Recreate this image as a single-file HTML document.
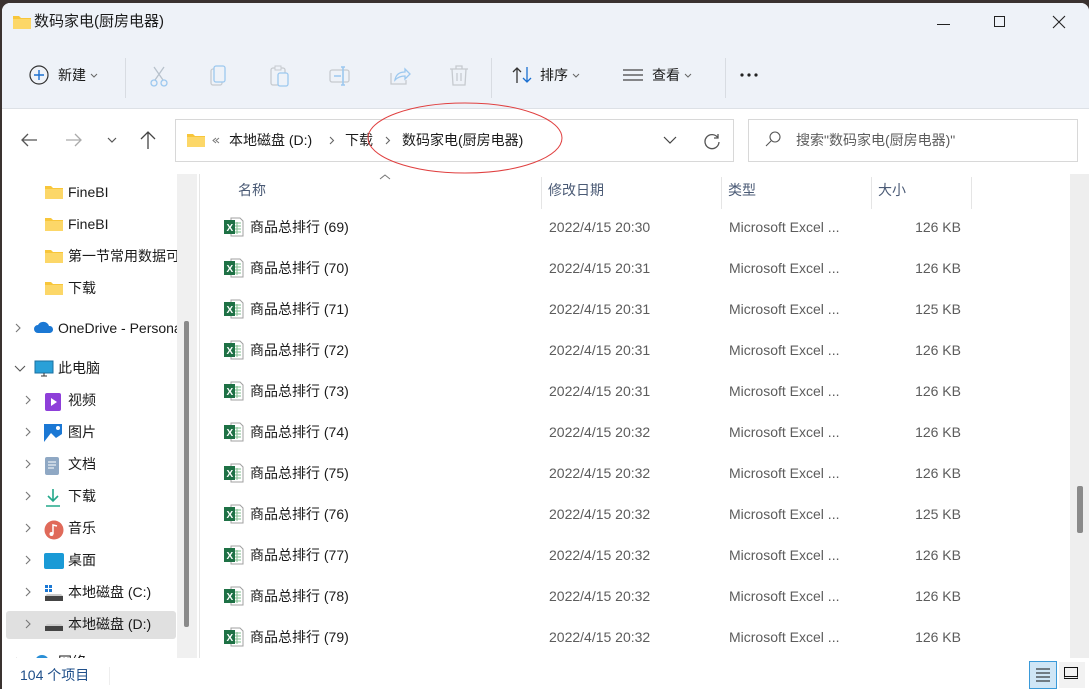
<!DOCTYPE html>
<html><head><meta charset="utf-8"><style>
*{margin:0;padding:0;box-sizing:border-box}
body{width:1089px;height:689px;overflow:hidden;background:#3a3230;font-family:"Liberation Sans","Noto Sans CJK SC",sans-serif;font-size:14px;line-height:20px;color:#1a1a1a;position:relative}
.win{position:absolute;left:2px;top:3px;right:0;bottom:0;background:#fff;border-top-left-radius:8px;border-top-right-radius:8px;overflow:hidden}
.top{position:absolute;left:0;top:0;right:0;height:106px;background:#eef2f8;border-bottom:1px solid #dde1e6}
.a{position:absolute;white-space:nowrap}
.sep{position:absolute;width:1px;background:#d8dce2}
.gray{color:#5c5c5c}
.hdr{color:#4a5a75;font-size:14px}
.row{position:absolute;left:0;width:1000px;height:20px}
.dd{display:inline-block;vertical-align:middle;margin-left:4px}
</style></head><body>
<div class="win">
<div class="top">
 <svg class="a" style="left:10px;top:11px" width="20" height="16"><path d="M1 2h6l2 2h10v11H1z" fill="#f8c63a"/><path d="M1 5h18v10H1z" fill="#fcd768"/></svg>
 <div class="a" style="left:32px;top:9px;font-size:15px">数码家电(厨房电器)</div>
 <div class="a" style="left:935px;top:21px;width:13px;height:1px;background:#222"></div>
 <div class="a" style="left:992px;top:13px;width:11px;height:11px;border:1px solid #222"></div>
 <svg class="a" style="left:1050px;top:12px" width="14" height="14"><path d="M1 1l12 12M13 1L1 13" stroke="#222" stroke-width="1.1"/></svg>
 <svg class="a" style="left:27px;top:62px" width="20" height="20"><circle cx="10" cy="10" r="9" fill="none" stroke="#333" stroke-width="1.2"/><path d="M10 5v10M5 10h10" stroke="#1a6fd0" stroke-width="1.4"/></svg>
 <div class="a" style="left:56px;top:62px">新建<svg class="dd" width="8" height="6"><path d="M1 1l3 3 3-3" fill="none" stroke="#666"/></svg></div>
 <div class="sep" style="left:123px;top:55px;height:40px"></div>
 <svg class="a" style="left:146px;top:62px" width="22" height="22"><path d="M6 2l9 13M16 2L7 15" stroke="#b8c2cc" stroke-width="1.3"/><circle cx="6" cy="18" r="3" fill="none" stroke="#9cc8ef" stroke-width="1.3"/><circle cx="16" cy="18" r="3" fill="none" stroke="#9cc8ef" stroke-width="1.3"/></svg>
 <svg class="a" style="left:207px;top:62px" width="20" height="22"><rect x="2" y="4" width="11" height="16" rx="2" fill="none" stroke="#c6cacf" stroke-width="1.3"/><rect x="5" y="1" width="11" height="16" rx="2" fill="#eef2f8" stroke="#9cc8ef" stroke-width="1.3"/></svg>
 <svg class="a" style="left:267px;top:62px" width="22" height="22"><rect x="2" y="3" width="14" height="17" rx="2" fill="none" stroke="#c6cacf" stroke-width="1.3"/><rect x="6" y="1" width="6" height="4" fill="#eef2f8" stroke="#c6cacf"/><rect x="9" y="8" width="10" height="13" rx="2" fill="#eef2f8" stroke="#9cc8ef" stroke-width="1.3"/></svg>
 <svg class="a" style="left:327px;top:62px" width="22" height="22"><rect x="1" y="5" width="19" height="12" rx="2" fill="none" stroke="#c6cacf" stroke-width="1.3"/><path d="M5 11h7M14 2v18M12 2h4M12 20h4" stroke="#9cc8ef" stroke-width="1.6"/></svg>
 <svg class="a" style="left:387px;top:62px" width="22" height="22"><path d="M2 8v11h15v-4" fill="none" stroke="#c6cacf" stroke-width="1.3"/><path d="M6 15c1-6 5-8 10-8V4l5 5-5 5v-3c-4 0-7 1-10 4z" fill="none" stroke="#9cc8ef" stroke-width="1.3"/></svg>
 <svg class="a" style="left:447px;top:62px" width="20" height="22"><path d="M1 4h18M7 4V1h6v3M3 4l1 16h12l1-16M8 8v8M12 8v8" fill="none" stroke="#c6cacf" stroke-width="1.3"/></svg>
 <div class="sep" style="left:489px;top:55px;height:40px"></div>
 <svg class="a" style="left:510px;top:63px" width="22" height="18"><path d="M5 17V2M1 6l4-4 4 4" fill="none" stroke="#333" stroke-width="1.3"/><path d="M15 1v15M11 12l4 4 4-4" fill="none" stroke="#1a6fd0" stroke-width="1.3"/></svg>
 <div class="a" style="left:538px;top:62px">排序<svg class="dd" width="8" height="6"><path d="M1 1l3 3 3-3" fill="none" stroke="#666"/></svg></div>
 <svg class="a" style="left:621px;top:66px" width="20" height="12"><path d="M0 1h20M0 6h20M0 11h20" stroke="#444" stroke-width="1.2"/></svg>
 <div class="a" style="left:650px;top:62px">查看<svg class="dd" width="8" height="6"><path d="M1 1l3 3 3-3" fill="none" stroke="#666"/></svg></div>
 <div class="sep" style="left:723px;top:55px;height:40px"></div>
 <svg class="a" style="left:738px;top:70px" width="20" height="4"><circle cx="2" cy="2" r="1.6" fill="#222"/><circle cx="9" cy="2" r="1.6" fill="#222"/><circle cx="16" cy="2" r="1.6" fill="#222"/></svg>
</div>
<!-- nav -->
<svg class="a" style="left:18px;top:129px" width="18" height="16"><path d="M17 8H2M8 2L2 8l6 6" fill="none" stroke="#555" stroke-width="1.3"/></svg>
<svg class="a" style="left:63px;top:129px" width="18" height="16"><path d="M1 8h15M10 2l6 6-6 6" fill="none" stroke="#aaa" stroke-width="1.3"/></svg>
<svg class="a" style="left:105px;top:133px" width="10" height="8"><path d="M1 2l4 4 4-4" fill="none" stroke="#555" stroke-width="1.2"/></svg>
<svg class="a" style="left:137px;top:127px" width="18" height="20"><path d="M9 19V2M2 9l7-7 7 7" fill="none" stroke="#444" stroke-width="1.3"/></svg>
<div class="a" style="left:173px;top:116px;width:559px;height:43px;border:1px solid #d8d8d8;background:#fff"></div>
<svg class="a" style="left:184px;top:129px" width="20" height="16"><path d="M1 2h6l2 2h10v11H1z" fill="#f8c63a"/><path d="M1 5h18v10H1z" fill="#fcd768"/></svg>
<svg class="a" style="left:210px;top:134px" width="8" height="7"><path d="M4 1L1 3.5 4 6M7 1L4 3.5 7 6" fill="none" stroke="#777"/></svg>
<div class="a" style="left:227px;top:127px">本地磁盘 (D:)</div>
<svg class="a" style="left:327px;top:133px" width="6" height="9"><path d="M1 1l3.5 3.5L1 8" fill="none" stroke="#666" stroke-width="1.1"/></svg>
<div class="a" style="left:343px;top:127px">下载</div>
<svg class="a" style="left:383px;top:133px" width="6" height="9"><path d="M1 1l3.5 3.5L1 8" fill="none" stroke="#666" stroke-width="1.1"/></svg>
<div class="a" style="left:400px;top:127px">数码家电(厨房电器)</div>
<svg class="a" style="left:661px;top:133px" width="14" height="9"><path d="M1 1l6 6 6-6" fill="none" stroke="#444" stroke-width="1.2"/></svg>
<svg class="a" style="left:700px;top:127px" width="20" height="20"><path d="M16 4v4h-4M16 8A7 7 0 1 0 17 12" fill="none" stroke="#555" stroke-width="1.3"/></svg>
<div class="a" style="left:746px;top:116px;width:330px;height:43px;border:1px solid #d8d8d8;background:#fff"></div>
<svg class="a" style="left:763px;top:128px" width="16" height="16"><circle cx="10" cy="6" r="5" fill="none" stroke="#555" stroke-width="1.1"/><path d="M6 10L1 15" stroke="#555" stroke-width="1.1"/></svg>
<div class="a gray" style="left:794px;top:127px">搜索"数码家电(厨房电器)"</div>
<!-- sidebar -->
<div class="a" style="left:175px;top:171px;width:20px;height:484px;background:#f0f0f0"></div>
<div class="a" style="left:182px;top:318px;width:5px;height:306px;background:#8a8a8a;border-radius:2px"></div>
<div class="a" style="left:197px;top:171px;width:1px;height:484px;background:#e5e5e5"></div>
<div class="a" style="left:0;top:171px;width:175px;height:484px;overflow:hidden">
<div class="a" style="left:4px;top:437px;width:170px;height:28px;background:#e0e0e0;border-radius:3px"></div>
<div id="side" class="a" style="left:0;top:-171px;width:175px;height:700px"></div>
</div>
<!-- content -->
<div class="a" style="left:1068px;top:171px;width:21px;height:484px;background:#eeeeee"></div>
<div class="a" style="left:1075px;top:483px;width:6px;height:47px;background:#8a8a8a;border-radius:2px"></div>
<svg class="a" style="left:377px;top:170px" width="12" height="8"><path d="M1 6l5-4 5 4" fill="none" stroke="#777" stroke-width="1"/></svg>
<div class="a hdr" style="left:236px;top:177px">名称</div>
<div class="sep" style="left:539px;top:174px;height:32px;background:#e5e5e5"></div>
<div class="a hdr" style="left:546px;top:177px">修改日期</div>
<div class="sep" style="left:719px;top:174px;height:32px;background:#e5e5e5"></div>
<div class="a hdr" style="left:726px;top:177px">类型</div>
<div class="sep" style="left:869px;top:174px;height:32px;background:#e5e5e5"></div>
<div class="a hdr" style="left:876px;top:177px">大小</div>
<div class="sep" style="left:969px;top:174px;height:32px;background:#e5e5e5"></div>
<div id="rows"></div>
<!-- status -->
<div class="a" style="left:18px;top:662px;color:#1f4f8a">104 个项目</div>
<div class="sep" style="left:107px;top:664px;height:18px;background:#eee"></div>
<div class="a" style="left:1027px;top:658px;width:28px;height:28px;border:1px solid #3a9ad9;background:#cfe6f6"></div>
<svg class="a" style="left:1034px;top:665px" width="14" height="14"><path d="M0 1h14M0 5h14M0 9h14M0 13h14" stroke="#111" stroke-width="1"/></svg>
<div class="a" style="left:1057px;top:659px;width:26px;height:26px;background:#f2f2f2"></div>
<div class="a" style="left:1062px;top:664px;width:14px;height:12px;border:1px solid #111;border-bottom-width:3px;border-bottom-style:double"></div>
</div>
<svg class="a" style="left:0;top:0;pointer-events:none" width="1089" height="689"><ellipse cx="465" cy="138" rx="97" ry="35" fill="none" stroke="#e04040" stroke-width="1"/></svg>
<script>
var xl='<svg width="20" height="20" style="position:absolute;left:0;top:0"><path d="M7 1h9l3 3v15H7z" fill="#fff" stroke="#a0a0a0"/><path d="M10 6h7M10 9h7M10 12h7M10 15h7M13 5v12" stroke="#7fbf8f"/><rect x="0" y="3" width="11" height="14" fill="#1e7145"/><text x="2.5" y="14" font-size="10" font-weight="bold" fill="#fff" font-family="Liberation Sans">X</text></svg>';
var nums=[69,70,71,72,73,74,75,76,77,78,79],times=['20:30','20:31','20:31','20:31','20:31','20:32','20:32','20:32','20:32','20:32','20:32'],sz=[126,126,125,126,126,126,126,125,126,126,126],h='';
for(var i=0;i<11;i++){var y=214+i*41;h+='<div class="row" style="top:'+(y)+'px"><div class="a" style="left:222px;top:0;width:20px;height:20px">'+xl+'</div><div class="a" style="left:248px;top:0">商品总排行 ('+nums[i]+')</div><div class="a gray" style="left:547px;top:0">2022/4/15 '+times[i]+'</div><div class="a gray" style="left:727px;top:0">Microsoft Excel ...</div><div class="a gray" style="left:880px;top:0;width:79px;text-align:right">'+sz[i]+' KB</div></div>';}
document.getElementById('rows').innerHTML=h;
var fold='<svg width="20" height="16"><path d="M1 2h6l2 2h10v11H1z" fill="#f8c63a"/><path d="M1 5h18v10H1z" fill="#fcd768"/></svg>';
var chev='<svg width="8" height="12"><path d="M2 2l4 4-4 4" fill="none" stroke="#777" stroke-width="1.1"/></svg>';
var s=[[178,'',42,fold,66,'FineBI'],[210,'',42,fold,66,'FineBI'],[242,'',42,fold,66,'第一节常用数据可'],[274,'',42,fold,66,'下载'],
[314,16,32,'<svg width="20" height="14"><path d="M4 13a4 4 0 0 1 0-8 6 6 0 0 1 11 1 3.5 3.5 0 0 1 1 7z" fill="#1b78d4"/></svg>',56,'OneDrive - Personal'],
[354,'v',32,'<svg width="20" height="18"><rect x="1" y="1" width="18" height="12" fill="#29a0d8" stroke="#1a6fa0"/><path d="M7 16h6M10 13v3" stroke="#333"/></svg>',56,'此电脑'],
[386,26,42,'<svg width="18" height="20"><rect x="1" y="1" width="16" height="18" rx="2" fill="#8e3fd9"/><path d="M7 6v8l6-4z" fill="#fff"/></svg>',66,'视频'],
[418,26,42,'<svg width="18" height="18"><rect x="0" y="0" width="18" height="18" fill="#1b78d4"/><path d="M0 18l7-9 5 5 6-4v8z" fill="#fff"/><circle cx="14" cy="4" r="2" fill="#fff"/></svg>',66,'图片'],
[450,26,42,'<svg width="16" height="20"><rect x="1" y="1" width="14" height="18" rx="2" fill="#8fa8c4"/><path d="M4 6h8M4 9h8M4 12h6" stroke="#fff"/></svg>',66,'文档'],
[482,26,42,'<svg width="18" height="20"><path d="M9 1v12M4 8l5 5 5-5M2 18h14" fill="none" stroke="#23a88a" stroke-width="1.6"/></svg>',66,'下载'],
[514,26,42,'<svg width="20" height="20"><circle cx="10" cy="10" r="9.5" fill="#e06a5a"/><path d="M9 14V5l4 1" fill="none" stroke="#fff" stroke-width="1.5"/><circle cx="7.5" cy="14" r="2" fill="#fff"/></svg>',66,'音乐'],
[546,26,42,'<svg width="20" height="18"><rect x="0" y="1" width="20" height="16" rx="2" fill="#1a9ad6"/></svg>',66,'桌面'],
[578,26,42,'<svg width="20" height="20"><rect x="1" y="1" width="3" height="3" fill="#1b78d4"/><rect x="5" y="1" width="3" height="3" fill="#1b78d4"/><rect x="1" y="5" width="3" height="3" fill="#1b78d4"/><rect x="5" y="5" width="3" height="3" fill="#1b78d4"/><rect x="1" y="12" width="18" height="5" fill="#444"/><path d="M1 12l2-2h14l2 2" fill="#ccc"/></svg>',66,'本地磁盘 (C:)'],
[610,26,42,'<svg width="20" height="20"><rect x="1" y="10" width="18" height="5" fill="#444"/><path d="M1 10l2-2h14l2 2" fill="#ccc"/></svg>',66,'本地磁盘 (D:)'],
[648,16,32,'<svg width="20" height="20"><circle cx="8" cy="8" r="7" fill="#2a8fd6"/></svg>',56,'网络']];
var o='';s.forEach(function(r){var t=r[0];
if(r[1]==='v')o+='<svg class="a" style="left:12px;top:'+(t+8)+'px" width="12" height="8"><path d="M1 1l5 5 5-5" fill="none" stroke="#555" stroke-width="1.1"/></svg>';
else if(r[1]!=='')o+='<div class="a" style="left:'+(r[1]-4)+'px;top:'+(t+5)+'px;line-height:0">'+chev+'</div>';
o+='<div class="a" style="left:'+r[2]+'px;top:'+(t+3)+'px;line-height:0">'+r[3]+'</div><div class="a" style="left:'+r[4]+'px;top:'+(t+1)+'px;max-width:'+(175-r[4])+'px;overflow:hidden">'+r[5]+'</div>';});
document.getElementById('side').innerHTML=o;
</script>
</body></html>
